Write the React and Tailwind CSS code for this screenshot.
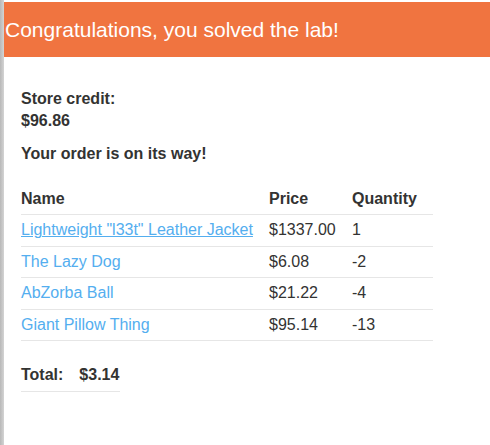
export default function App() {
  const items = [
    { name: 'Lightweight "l33t" Leather Jacket', price: '$1337.00', qty: '1', hover: true },
    { name: 'The Lazy Dog', price: '$6.08', qty: '-2' },
    { name: 'AbZorba Ball', price: '$21.22', qty: '-4' },
    { name: 'Giant Pillow Thing', price: '$95.14', qty: '-13' },
  ];

  return (
    <div className="flex min-h-[445px] bg-white font-['Liberation_Sans',Arial,sans-serif] text-[#333332]">
      {/* window edge */}
      <div className="w-[4px] shrink-0 bg-gradient-to-r from-[#b8b8b8] to-[#d4d4d4]" />

      <div className="flex-1">
        {/* Banner */}
        <div className="mt-[2px] h-[55px] flex items-center bg-[#f07440] pl-[1px]">
          <h4 className="text-[21px] text-white leading-none">Congratulations, you solved the lab!</h4>
        </div>

        <main className="pl-[17px] pt-[31px]">
          <p className="text-[16px] font-bold leading-[22px]">
            Store credit:
            <br />
            $96.86
          </p>
          <p className="mt-[11px] text-[16px] font-bold leading-[22px]">Your order is on its way!</p>

          {/* Items */}
          <div className="mt-[19px] w-[412px] text-[16px]">
            <div className="grid grid-cols-[248px_83px_1fr] h-[31px] items-center border-b border-[#e6e6e6] font-bold">
              <span>Name</span>
              <span>Price</span>
              <span>Quantity</span>
            </div>
            {items.map((it) => (
              <div
                key={it.name}
                className="grid grid-cols-[248px_83px_1fr] h-[31.5px] items-center border-b border-[#e6e6e6]"
              >
                <a className={`text-[#54aeef] ${it.hover ? 'underline' : ''}`}>{it.name}</a>
                <span>{it.price}</span>
                <span>{it.qty}</span>
              </div>
            ))}
          </div>

          {/* Total */}
          <div className="mt-[18px] inline-flex gap-[16px] h-[33px] items-center border-b border-[#e6e6e6] pr-[1px] text-[16px] font-bold">
            <span>Total:</span>
            <span>$3.14</span>
          </div>
        </main>
      </div>
    </div>
  );
}
